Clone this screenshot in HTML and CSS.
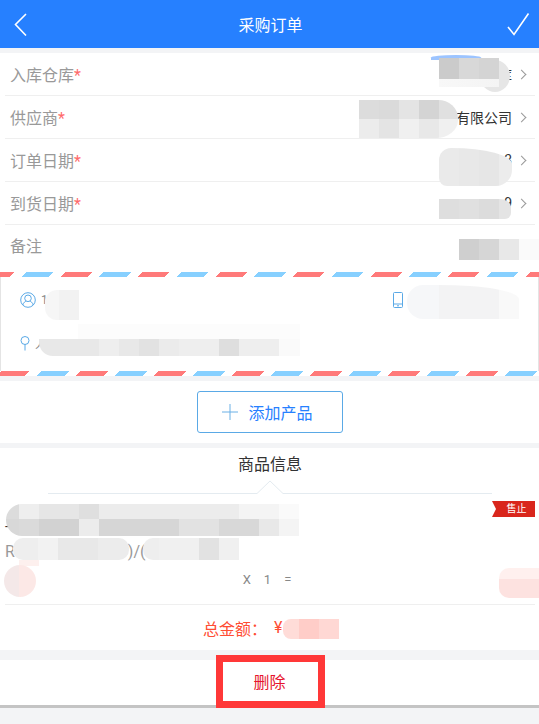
FILE: index.html
```html
<!DOCTYPE html>
<html lang="zh">
<head>
  <meta charset="UTF-8">
  <meta name="viewport" content="width=device-width, initial-scale=1.0">
  <title>采购订单</title>
  <link rel="stylesheet" href="styles.css">
</head>
<body>
  <div class="page">
    <header class="topbar">
      <svg class="top-icon" width="24" height="24" viewBox="0 0 24 24"><polyline points="15,2 4.500,12.500 15,23.500"/></svg>
      <h1>采购订单</h1>
      <svg class="top-icon" width="24" height="24" viewBox="0 0 24 24"><polyline points="2,15 8,22.500 22.500,1.500"/></svg>
    </header>

    <!-- 表单 -->
    <section class="form">
      <div class="row"><span class="label">入库仓库<em>*</em></span><span class="value">库</span><span class="arrow"></span></div>
      <div class="row"><span class="label">供应商<em>*</em></span><span class="value">有限公司</span><span class="arrow"></span></div>
      <div class="row"><span class="label">订单日期<em>*</em></span><span class="value">3</span><span class="arrow"></span></div>
      <div class="row"><span class="label">到货日期<em>*</em></span><span class="value">9</span><span class="arrow"></span></div>
      <div class="row last"><span class="label">备注</span></div>
    </section>

    <!-- 收货地址 -->
    <section class="airmail">
      <div class="contact">
        <div class="contact-item">
          <svg width="16" height="16" viewBox="0 0 16 16" class="line-icon"><circle cx="8" cy="8" r="7.300"/><circle cx="8" cy="6.300" r="3.300"/><path d="M2.800 13c.6-2.600 2.500-3.600 3.500-3.800M13.200 13c-.6-2.600-2.500-3.600-3.500-3.800"/></svg>
          <span class="contact-text">1</span>
        </div>
        <div class="contact-item phone">
          <svg width="10" height="16" viewBox="0 0 10 16" class="line-icon"><rect x=".5" y=".5" width="9" height="15" rx="1"/><path d="M.5 12h9M4 13.800h2"/></svg>
        </div>
      </div>
      <div class="contact-item address">
        <svg width="10" height="15" viewBox="0 0 10 15" class="line-icon"><circle cx="5" cy="4.500" r="4"/><path d="M5 8.500v6"/></svg>
        <span class="contact-text">人</span>
      </div>
    </section>

    <section class="add-box">
      <button class="add-btn">
        <svg width="18" height="18" viewBox="0 0 18 18"><path d="M9 1v16M1 9h16"/></svg>
        <span>添加产品</span>
      </button>
    </section>

    <!-- 商品信息 -->
    <section class="goods">
      <h2>商品信息</h2>
      <svg class="notch" width="444" height="15" viewBox="0 0 444 15"><polyline points="0,13.500 209,13.500 222,1 235,13.500 444,13.500"/></svg>
      <span class="badge">售止</span>
      <div class="goods-name">-</div>
      <div class="goods-spec">R<span class="spec-mid">)/(</span></div>
      <div class="goods-qty"><span>X</span><span>1</span><span>=</span></div>
      <div class="total">总金额：<span class="yen">¥</span></div>
    </section>

    <section class="delete-bar">
      <span class="delete-text">删除</span>
      <span class="mark"></span>
    </section>

    <!-- 打码区域 -->
    <i class="blot b-arc"></i>
    <i class="blot b-wh1"></i>
    <i class="blot b-wh2"></i>
    <i class="blot b-sup"></i>
    <i class="blot b-d1"></i>
    <i class="blot b-d2"></i>
    <i class="blot b-note"></i>
    <i class="blot b-name"></i>
    <i class="blot b-phone"></i>
    <i class="blot b-addr"></i>
    <i class="blot b-title"></i>
    <i class="blot b-spec1"></i>
    <i class="blot b-spec2"></i>
    <i class="blot b-pale"></i>
    <i class="blot b-pic"></i>
    <i class="blot b-price"></i>
    <i class="blot b-total"></i>
  </div>
</body>
</html>
```

FILE: styles.css
```css
* {
  box-sizing: border-box;
}

body {
  margin: 0;
  background-color: #f3f4f6;
  font-family: Roboto, 'Noto Sans CJK SC', sans-serif;
  color: #333;
}

.page {
  position: relative;
  width: 539px;
  height: 724px;
  overflow: hidden;
}

/* 顶部 */
.topbar {
  display: flex;
  align-items: center;
  justify-content: space-between;
  height: 48px;
  padding: 0 9px 0 11px;
  background-color: #2680ff;
}

.topbar h1 {
  margin: 0;
  font-size: 16px;
  font-weight: normal;
  color: white;
}

.top-icon polyline {
  fill: none;
  stroke: white;
  stroke-width: 1.6;
}

/* 表单 */
.form {
  margin-top: 5px;
  padding: 0 4px 0 5px;
  background-color: white;
}

.row {
  display: flex;
  align-items: center;
  height: 43px;
  padding-left: 5px;
  border-bottom: 1px solid #efefef;
  font-size: 16px;
}

.row.last {
  height: 47px;
  padding-bottom: 8px;
  border-bottom: 0;
}

.label {
  flex: 1;
  color: #999;
}

.label em {
  font-style: normal;
  color: #ff6b6b;
}

.value {
  font-size: 14px;
  color: #333;
}

.arrow {
  width: 7px;
  height: 7px;
  margin: 0 10px 0 6px;
  border-top: 1px solid #999;
  border-right: 1px solid #999;
  transform: rotate(45deg);
}

/* 航空信封 */
.airmail {
  position: relative;
  height: 104px;
  padding: 20px 20px 0 19px;
  background-color: white;
  border-left: 1px solid #e4e4e4;
  border-right: 1px solid #e4e4e4;
}

.airmail::before,
.airmail::after {
  content: "";
  position: absolute;
  left: -1px;
  right: -1px;
  height: 5px;
}

.airmail::before {
  top: 0;
  background: repeating-linear-gradient(135deg,
    #ff7a7a 0 10.6px, white 10.6px 18.4px,
    #87d0ff 18.4px 38px, white 38px 46px,
    #ff7a7a 46px 54.8px);
}

.airmail::after {
  bottom: 0;
  background: repeating-linear-gradient(135deg,
    white 0 1.4px, #ff7a7a 1.4px 21.2px,
    white 21.2px 29px, #87d0ff 29px 48.800px,
    white 48.800px 55.200px);
}

.contact {
  display: flex;
  justify-content: space-between;
  padding-right: 115px;
}

.contact-item {
  display: flex;
  align-items: center;
  gap: 5px;
  height: 16px;
}

.contact-item.address {
  margin-top: 28px;
  height: 15px;
}

.contact-text {
  font-size: 12px;
  color: #888;
}

.line-icon {
  fill: none;
  stroke: #5aa9e6;
  stroke-width: 1;
}

.add-box {
  display: flex;
  align-items: center;
  justify-content: center;
  height: 62px;
  margin-top: 5px;
  background-color: white;
}

.add-btn {
  display: flex;
  align-items: center;
  justify-content: center;
  gap: 9px;
  width: 146px;
  height: 42px;
  padding: 0 5px 0 0;
  background-color: white;
  border: 1px solid #5aa9e6;
  border-radius: 3px;
  font-family: inherit;
  font-size: 16px;
  color: #2680ff;
}

.add-btn path {
  stroke: #6ab0e6;
  stroke-width: 1;
}

/* 商品信息 */
.goods {
  position: relative;
  height: 202px;
  margin-top: 5px;
  padding: 0 4px 0 5px;
  background-color: white;
}

.goods h2 {
  margin: 0;
  padding-top: 6px;
  height: 32px;
  font-size: 16px;
  font-weight: normal;
  line-height: 22px;
  text-align: center;
}

.notch {
  display: block;
  margin-left: 43px;
}

.notch polyline {
  fill: none;
  stroke: #e4ebf0;
  stroke-width: 1;
}

.badge {
  position: absolute;
  top: 53px;
  right: 4px;
  width: 43px;
  height: 16px;
  padding-left: 6px;
  background-color: #d9261c;
  clip-path: polygon(0 0, 100% 0, 100% 100%, 0 100%, 4px 50%);
  font-size: 10px;
  line-height: 16px;
  text-align: center;
  color: white;
}

.goods-name {
  height: 37px;
  margin-top: 10px;
  font-size: 14px;
  line-height: 42px;
}

.goods-spec {
  display: flex;
  height: 28px;
  font-size: 16px;
  line-height: 20px;
  color: #999;
}

.spec-mid {
  margin-left: 113px;
}

.goods-qty {
  display: flex;
  justify-content: center;
  gap: 13px;
  height: 35px;
  padding-right: 6px;
  border-bottom: 1px solid #efefef;
  font-size: 13px;
  line-height: 20px;
  color: #888;
}

.total {
  display: flex;
  align-items: center;
  height: 45px;
  padding-left: 198px;
  font-size: 16px;
  color: #ff4d33;
}

.yen {
  margin-left: 7px;
}

/* 删除 */
.delete-bar {
  position: relative;
  display: flex;
  align-items: center;
  justify-content: center;
  height: 48px;
  margin-top: 10px;
  padding-bottom: 3px;
  background-color: white;
  border-bottom: 3px solid #c4c4c4;
}

.delete-text {
  font-size: 16px;
  color: #e6142d;
}

.mark {
  position: absolute;
  left: 216px;
  top: -5px;
  width: 109px;
  height: 53px;
  border: 7px solid #ff3838;
}

/* 打码色块 */
.blot {
  position: absolute;
  display: block;
}

.b-arc {
  left: 431px;
  top: 55px;
  width: 50px;
  height: 5px;
  border-radius: 50% 50% 0 0;
  background-color: #9cc4ff;
}

.b-wh1 {
  left: 480px;
  top: 60px;
  width: 30px;
  height: 32px;
  border-radius: 50%;
  background-color: #e6e6e6;
}

.b-wh2 {
  left: 439px;
  top: 58px;
  width: 60px;
  height: 29px;
  background:
    linear-gradient(90deg, #cbcbcb 0 20px, #d8d8d8 20px 40px, #d4d4d4 40px 60px) 0 0 / 100% 21px no-repeat,
    linear-gradient(90deg, #f8f8f8, #f4f4f4);
}

.b-sup {
  left: 359px;
  top: 100px;
  width: 99px;
  height: 38px;
  border-radius: 0 20px 22px 0 / 0 18px 18px 0;
  background:
    linear-gradient(90deg, #dcdcdc 0 20px, #dadada 20px 40px, #e4e4e4 40px 60px, #d4d4d4 60px 80px, #e0e0e0 80px) 0 0 / 100% 19px no-repeat,
    linear-gradient(90deg, #ececec 0 20px, #e4e4e4 20px 40px, #f0f0f0 40px 60px, #e8e8e8 60px 80px, #f0f0f0 80px);
}

.b-d1 {
  left: 439px;
  top: 148px;
  width: 73px;
  height: 38px;
  border-radius: 12px 60px 16px 8px / 12px 16px 16px 8px;
  background: linear-gradient(90deg, #eaeaea 0 20px, #e8e8e8 20px 40px, #e6e6e6 40px 60px, #ececec 60px);
}

.b-d2 {
  left: 439px;
  top: 199px;
  width: 72px;
  height: 20px;
  border-radius: 0 12px 6px 0 / 0 8px 6px 0;
  background: linear-gradient(90deg, #dedede 0 20px, #e0e0e0 20px 40px, #dcdcdc 40px 60px, #e4e4e4 60px);
}

.b-note {
  left: 459px;
  top: 239px;
  width: 80px;
  height: 21px;
  background: linear-gradient(90deg, #cfcfcf 0 20px, #d6d6d6 20px 40px, #e8e8e8 40px 60px, #fafafa 60px);
}

.b-name {
  left: 45px;
  top: 290px;
  width: 34px;
  height: 30px;
  border-radius: 12px 0 0 12px;
  background: linear-gradient(90deg, #f6f6f6 0 14px, #f2f2f2 14px);
}

.b-phone {
  left: 407px;
  top: 285px;
  width: 112px;
  height: 34px;
  border-radius: 16px 80px 0 16px / 16px 14px 0 16px;
  background: linear-gradient(90deg, #f6f7f9 0 32px, #f3f3f4 32px 92px, #f9f9f9 92px);
}

.b-addr {
  left: 39px;
  top: 324px;
  width: 261px;
  height: 32px;
  border-radius: 14px 0 0 14px;
  background:
    linear-gradient(90deg, #fff 0 39px, #fcfcfc 39px) 0 0 / 100% 15px no-repeat,
    linear-gradient(90deg, #e8e8e8 0 60px, #eeeeee 60px 80px, #e8e8e8 80px 100px, #e2e2e2 100px 120px, #ebebeb 120px 140px, #eeeeee 140px 180px, #dedede 180px 200px, #eeeeee 200px 240px, #fafafa 240px) 0 15px / 100% 17px no-repeat;
}

.b-title {
  left: 6px;
  top: 504px;
  width: 293px;
  height: 32px;
  border-radius: 16px 0 0 16px;
  background:
    linear-gradient(90deg, #dcdcdc 0 13px, #eeeeee 13px 33px, #e6e6e6 33px 73px, #dfdfdf 73px 93px, #ececec 93px 233px, #f4f4f4 233px 273px, #fafafa 273px) 0 0 / 100% 15px no-repeat,
    linear-gradient(90deg, #d8d8d8 0 13px, #dadada 13px 33px, #d2d2d2 33px 73px, #ececec 73px 93px, #d6d6d6 93px 173px, #e2e2e2 173px 213px, #d8d8d8 213px 253px, #e8e8e8 253px 273px, #f4f4f4 273px) 0 15px / 100% 17px no-repeat;
}

.b-spec1 {
  left: 13px;
  top: 538px;
  width: 116px;
  height: 22px;
  border-radius: 10px;
  background: linear-gradient(90deg, #eeeeee 0 25px, #f2f2f2 25px 45px, #e8e8e8 45px 85px, #ececec 85px);
}

.b-spec2 {
  left: 143px;
  top: 538px;
  width: 96px;
  height: 22px;
  border-radius: 10px 0 0 10px;
  background: linear-gradient(90deg, #eeeeee 0 16px, #f0f0f0 16px 56px, #e2e2e2 56px 76px, #f0f0f0 76px);
}

.b-pale {
  left: 19px;
  top: 560px;
  width: 20px;
  height: 6px;
  background-color: #fdf0ee;
}

.b-pic {
  left: 4px;
  top: 565px;
  width: 32px;
  height: 32px;
  border-radius: 50%;
  background: linear-gradient(90deg, #f4e8e8 0 15px, #fce8e6 15px);
}

.b-price {
  left: 499px;
  top: 568px;
  width: 40px;
  height: 30px;
  border-radius: 10px 0 0 10px;
  background:
    linear-gradient(#fff0ee, #fff0ee) 0 0 / 100% 11px no-repeat,
    #fde2e0;
}

.b-total {
  left: 283px;
  top: 619px;
  width: 56px;
  height: 20px;
  border-radius: 8px 0 0 8px;
  background: linear-gradient(90deg, #ffdcd8 0 16px, #ffcdc8 16px 36px, #ffd8d4 36px);
}
```
